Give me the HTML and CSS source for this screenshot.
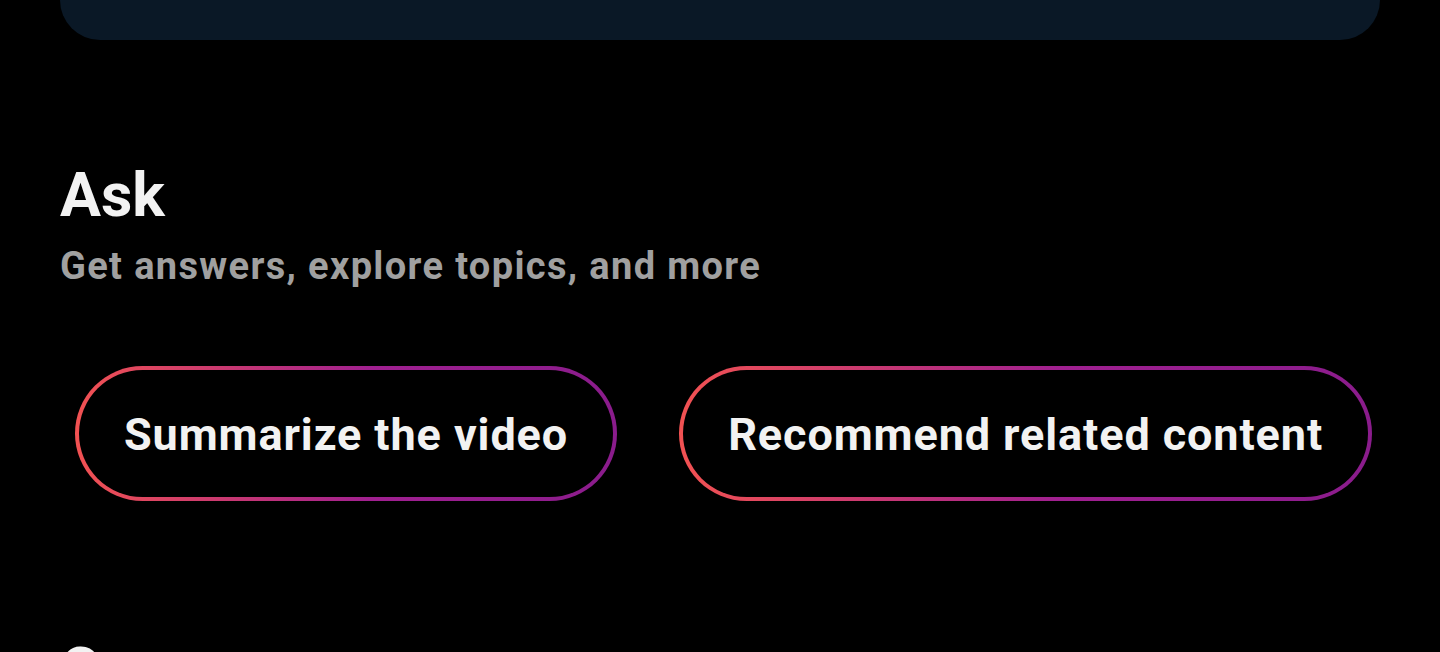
FILE: index.html
```html
<!DOCTYPE html>
<html lang="en">
  <head>
    <meta charset="UTF-8" />
    <meta name="viewport" content="width=device-width, initial-scale=1.0" />
    <title>Ask</title>
    <link rel="stylesheet" href="styles.css">
  </head>
  <body>
    <div class="player-card"></div>

    <section class="section">
      <h2 class="section-title">Ask</h2>
      <p class="section-subtitle">Get answers, explore topics, and more</p>

      <div class="chip-row">
        <button class="chip">Summarize the video</button>
        <button class="chip">Recommend related content</button>
      </div>
    </section>

    <section class="section next">
      <h2 class="section-title">Canvas</h2>
    </section>
  </body>
</html>
```

FILE: styles.css
```css
html,
body {
  margin: 0;
  padding: 0;
  background-color: #000;
  height: 652px;
  overflow: hidden;
}
body {
  font-family: Roboto, "Noto Sans", sans-serif;
  color: #f2f2f2;
}
.player-card {
  height: 40px;
  margin: 0 60px;
  background-color: #0a1826;
  border-radius: 0 0 40px 40px;
}
.section {
  padding: 0 60px;
}
.section-title {
  margin: 120px 0 0;
  font-size: 61px;
  line-height: 70px;
  font-weight: 700;
}
.section-subtitle {
  margin: 14px 0 0;
  font-size: 38px;
  line-height: 44px;
  font-weight: 700;
  letter-spacing: 1.35px;
  color: #a0a0a0;
}
.chip-row {
  display: flex;
  gap: 62px;
  margin-top: 78px;
  padding-left: 15px;
}
.chip {
  height: 135px;
  padding: 2px 45px 0;
  border: 4px solid transparent;
  border-radius: 68px;
  background:
    linear-gradient(#000, #000) padding-box,
    linear-gradient(90deg, #f25252, #a02090 55%, #8a1c8c) border-box;
  color: #f2f2f2;
  font-family: Roboto, "Noto Sans", sans-serif;
  font-size: 45px;
  font-weight: 700;
  letter-spacing: 0.9px;
  cursor: pointer;
}
.next .section-title {
  margin-top: 134px;
}
```
